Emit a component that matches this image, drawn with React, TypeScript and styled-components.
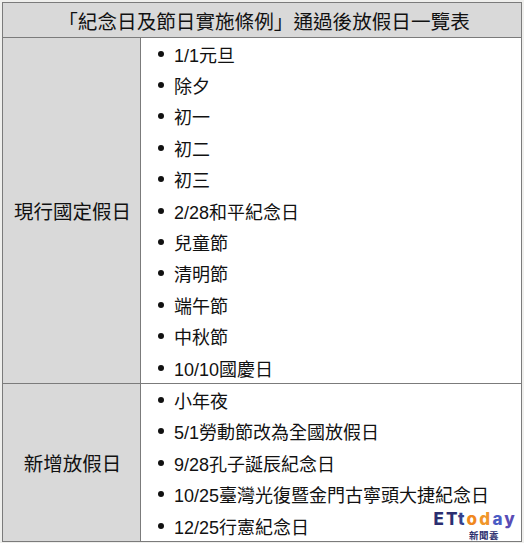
import styled, { createGlobalStyle } from "styled-components";

const GlobalStyle = createGlobalStyle`
  html, body {
    margin: 0;
    padding: 0;
    background: #efefed;
  }
  body {
    font-family: "Liberation Sans", "Noto Sans CJK TC", sans-serif;
    color: #111;
  }
`;

const Page = styled.div`
  position: relative;
  width: 524px;
  height: 543px;
  padding: 2px;
  box-sizing: border-box;
`;

const Table = styled.div`
  width: 520px;
  border: 1px solid #7b7b7b;
  box-sizing: border-box;
  background: #fff;
`;

const Header = styled.div`
  height: 34px;
  display: flex;
  align-items: center;
  justify-content: center;
  background: #d9d9d9;
  border-bottom: 1px solid #7b7b7b;
  font-size: 19.6px;
  padding-left: 4px;
`;

const Section = styled.div<{ $last?: boolean }>`
  display: grid;
  grid-template-columns: 138px 1fr;
  border-bottom: ${({ $last }) => ($last ? "none" : "1px solid #7b7b7b")};
`;

const Label = styled.div`
  display: flex;
  align-items: center;
  justify-content: center;
  background: #d9d9d9;
  border-right: 1px solid #7b7b7b;
  font-size: 19.5px;
  padding-left: 2px;
`;

const List = styled.ul`
  list-style: none;
  margin: 0;
  padding: 0;
`;

const Item = styled.li`
  display: flex;
  align-items: center;
  height: 31.4px;
  font-size: 18px;

  &::before {
    content: "";
    width: 6px;
    height: 6px;
    border-radius: 50%;
    background: #111;
    margin-left: 17px;
    margin-right: 10px;
    flex-shrink: 0;
  }
`;

const Logo = styled.div`
  position: absolute;
  right: 9px;
  bottom: 3px;
  display: flex;
  flex-direction: column;
  align-items: flex-end;
`;

const Wordmark = styled.div`
  font-family: Inter, "Noto Sans", sans-serif;
  font-weight: 800;
  font-size: 17px;
  line-height: 15px;
  letter-spacing: 2.2px;
  margin-right: -2px;
`;

const Letter = styled.span<{ $color: string }>`
  color: ${({ $color }) => $color};
`;

const SubMark = styled.div`
  font-family: "Noto Sans CJK TC", sans-serif;
  font-weight: 700;
  font-size: 9.5px;
  line-height: 10px;
  margin-top: 3px;
  color: #2c2f6e;
  margin-right: 16px;
  letter-spacing: 0.5px;
`;

const current = [
  "1/1元旦",
  "除夕",
  "初一",
  "初二",
  "初三",
  "2/28和平紀念日",
  "兒童節",
  "清明節",
  "端午節",
  "中秋節",
  "10/10國慶日",
];

const added = [
  "小年夜",
  "5/1勞動節改為全國放假日",
  "9/28孔子誕辰紀念日",
  "10/25臺灣光復暨金門古寧頭大捷紀念日",
  "12/25行憲紀念日",
];

const letters: [string, string][] = [
  ["E", "#2b2e70"],
  ["T", "#2b2e70"],
  ["t", "#34408c"],
  ["o", "#f0881e"],
  ["d", "#f0962a"],
  ["a", "#4a5cc4"],
  ["y", "#5a4cb4"],
];

const App = () => {
  return (
    <Page>
      <GlobalStyle />
      <Table>
        <Header>「紀念日及節日實施條例」通過後放假日一覽表</Header>
        <Section>
          <Label>現行國定假日</Label>
          <List>
            {current.map((d) => (
              <Item key={d}>{d}</Item>
            ))}
          </List>
        </Section>
        <Section $last>
          <Label>新增放假日</Label>
          <List>
            {added.map((d) => (
              <Item key={d}>{d}</Item>
            ))}
          </List>
        </Section>
      </Table>
      <Logo>
        <Wordmark>
          {letters.map(([l, c], i) => (
            <Letter key={i} $color={c}>
              {l}
            </Letter>
          ))}
        </Wordmark>
        <SubMark>新聞雲</SubMark>
      </Logo>
    </Page>
  );
};

export default App;
